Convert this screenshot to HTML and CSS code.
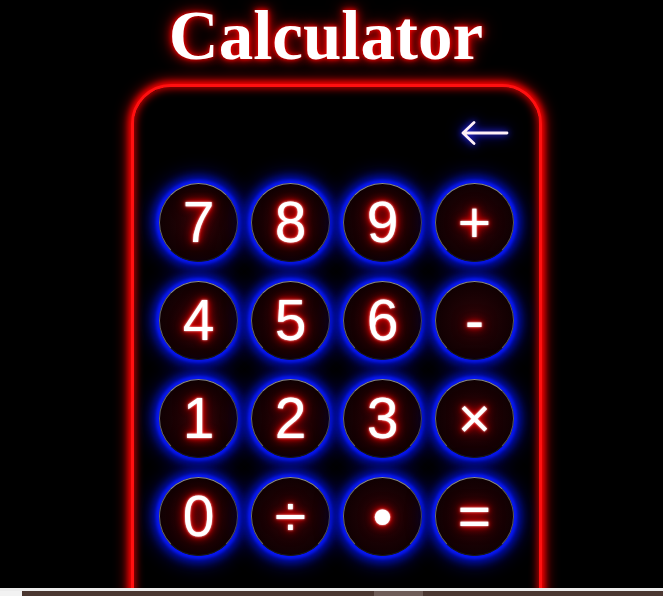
FILE: index.html
```html
<!DOCTYPE html>
<html lang="en">
<head>
<meta charset="utf-8">
<title>Calculator</title>
<link rel="stylesheet" href="styles.css">
</head>
<body>
  <h1 class="title">Calculator</h1>
  <div class="calc">
    <div class="display">
      <svg class="back" width="50" height="28" viewBox="0 0 50 28" aria-label="backspace">
        <path d="M4 14 H48 M15 3.5 L4 14 L15 24.5" fill="none" stroke="#fff0f6" stroke-width="2.8" stroke-linecap="round" stroke-linejoin="round"/>
      </svg>
    </div>
    <div class="keys">
      <button class="key">7</button>
      <button class="key">8</button>
      <button class="key">9</button>
      <button class="key op">+</button>
      <button class="key">4</button>
      <button class="key">5</button>
      <button class="key">6</button>
      <button class="key op">-</button>
      <button class="key">1</button>
      <button class="key">2</button>
      <button class="key">3</button>
      <button class="key op">&times;</button>
      <button class="key">0</button>
      <button class="key op">&divide;</button>
      <button class="key op">&bull;</button>
      <button class="key op">=</button>
    </div>
  </div>
  <div class="hbar">
    <div class="hbar-line"></div>
    <div class="hbar-track">
      <div class="hbar-btn"></div>
      <div class="hbar-a"></div>
      <div class="hbar-thumb"></div>
      <div class="hbar-b"></div>
    </div>
  </div>
</body>
</html>
```
FILE: styles.css
```css
html, body {
  margin: 0;
  padding: 0;
  background: #000;
  height: 596px;
  overflow: hidden;
}

.title {
  margin: 0;
  padding: 0 11px 0 0;
  font-family: "Liberation Serif", "Times New Roman", serif;
  font-weight: bold;
  font-size: 69px;
  line-height: 72px;
  text-align: center;
  color: #fff;
  text-shadow: 0 0 4px #f00, 0 0 10px #e00, 0 0 18px #a00;
}

.calc {
  box-sizing: border-box;
  width: 411px;
  height: 560px;
  margin: 12px 0 0 131px;
  border: 3px solid #ff1010;
  border-radius: 40px;
  box-shadow: 0 0 6px 2px #f00, 0 0 14px 3px #b00, inset 0 0 8px 1px #d00;
  background: #000;
}

.display {
  box-sizing: border-box;
  height: 96px;
  padding: 0 30px 4px 0;
  display: flex;
  align-items: center;
  justify-content: flex-end;
}

.back {
  display: block;
  filter: drop-shadow(0 0 3px #33f) drop-shadow(0 0 7px #00a);
}

.keys {
  display: grid;
  grid-template-columns: repeat(4, 79px);
  grid-auto-rows: 79px;
  column-gap: 13px;
  row-gap: 19px;
  justify-content: center;
}

.key {
  box-sizing: border-box;
  width: 79px;
  height: 79px;
  padding: 0;
  margin: 0;
  border-radius: 50%;
  border: 1px solid #1a1a1a;
  border-top-color: #8a8a8a;
  border-left-color: #6a6a6a;
  border-right-color: #5a5a5a;
  background: radial-gradient(circle at center, #2c0407 0%, #160103 55%, #060001 100%);
  box-shadow: 0 0 3px 3px #0818f4, 0 0 10px 6px #0010c4, 0 0 20px 8px #000866;
  font-family: "Liberation Sans", Arial, sans-serif;
  font-size: 57px;
  line-height: 1;
  color: #fff;
  text-shadow: 0 0 2px #fff, 0 0 5px #f00, 0 0 10px #f00, 0 0 16px #900;
  display: flex;
  align-items: center;
  justify-content: center;
}

.hbar {
  position: fixed;
  left: 0;
  right: 0;
  bottom: 0;
  height: 8px;
  display: flex;
  flex-direction: column;
}

.hbar-line {
  height: 3px;
  background: #ececec;
}

.hbar-track {
  flex: 1;
  display: flex;
}

.hbar-btn {
  width: 22px;
  background: #f2f2f2;
}

.hbar-a {
  width: 352px;
  background: #4b3731;
}

.hbar-thumb {
  width: 49px;
  background: #6e5c57;
}

.hbar-b {
  flex: 1;
  background: #4b3731;
}
```
